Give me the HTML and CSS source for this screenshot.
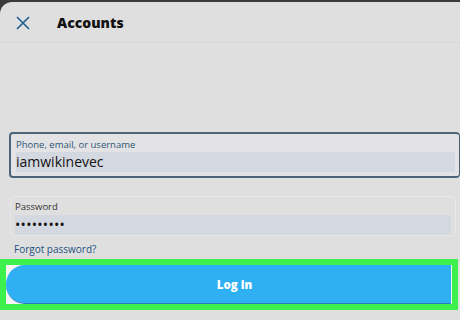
FILE: index.html
```
<!DOCTYPE html>
<html lang="en">
<head>
  <meta charset="UTF-8" />
  <title>Accounts</title>
  <link rel="stylesheet" href="styles.css">
</head>
<body>

<div class="screen">
  <div class="header">
    <svg class="close-icon" width="14" height="14" viewBox="0 0 14 14">
      <path d="M1 1 L13 13 M13 1 L1 13" stroke="#1f5f8f" stroke-width="1.6" fill="none"/>
    </svg>
    <div class="title">Accounts</div>
  </div>

  <div class="form">
    <div class="field focused">
      <div class="field-label">Phone, email, or username</div>
      <div class="field-input">iamwikinevec</div>
    </div>

    <div class="field">
      <div class="field-label">Password</div>
      <div class="field-input dots">•••••••••</div>
    </div>

    <div class="forgot">Forgot password?</div>

    <div class="login-outline">
      <button class="login-btn">Log in</button>
    </div>
  </div>
</div>

</body>
</html>
```

FILE: styles.css
```
* {
    box-sizing: border-box;
}

html, body {
    margin: 0;
    padding: 0;
    width: 460px;
    height: 320px;
    overflow: hidden;
    background: #3b3b3b;
    font-family: 'Open Sans', 'Noto Sans', sans-serif;
}

.screen {
    margin-top: 2px;
    height: 318px;
    background: #dfdfdf;
    border-radius: 12px 0 0 0;
}

.header {
    height: 41px;
    display: flex;
    align-items: center;
    padding-left: 16px;
    border-bottom: 1px solid #d7d7d7;
}
.close-icon {
    margin-top: 1px;
}
.title {
    margin-left: 27px;
    font-size: 14px;
    font-weight: 800;
    color: #111;
}

.form {
    padding-top: 89px;
}

.field {
    margin: 0 4px 0 10px;
    padding: 3px 4px 0 4px;
    height: 40px;
    border: 1px solid #e8e8e8;
    border-radius: 4px;
}
.field.focused {
    margin: 0 0 18px 9px;
    height: 46px;
    padding: 4px 4px 0 5px;
    border: 2px solid #4c6479;
    border-right-width: 1px;
    background: #e3e3e5;
}
.field-label {
    font-size: 9.5px;
    line-height: 14px;
    color: #333;
}
.focused .field-label {
    color: #2c5576;
}
.field-input {
    margin-top: 1px;
    height: 20px;
    background: #d4d8e0;
    font-size: 14px;
    line-height: 20px;
    color: #111;
}
.focused .field-input {
    margin-top: 0;
}
.dots {
    font-size: 14px;
    letter-spacing: 0.3px;
}

.forgot {
    margin: 6px 0 0 14px;
    font-size: 10px;
    line-height: 14px;
    color: #1d4f7e;
}

.login-outline {
    margin: 3px 2px 0 0;
    height: 51px;
    border: 6px solid #3ef04b;
    background: #f4f4f4;
}
.login-btn {
    display: block;
    width: 445px;
    height: 39px;
    border: none;
    border-bottom: 1px solid #2a7fb8;
    border-radius: 19px 0 0 19px;
    background: #2fb0f3;
    color: #fff;
    font-family: inherit;
    font-size: 11.5px;
    font-weight: 800;
    padding: 0 0 0 12px;
}
```
